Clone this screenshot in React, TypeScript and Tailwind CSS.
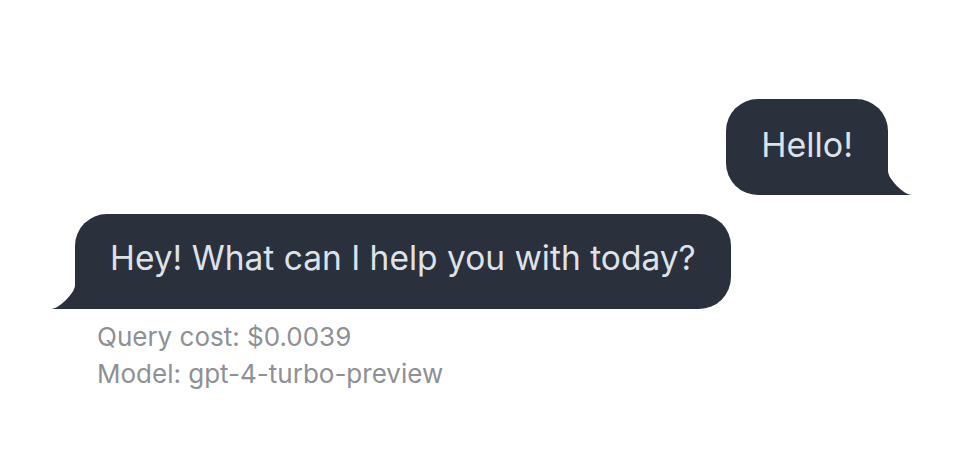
import React from "react";

function Tail({ side }: { side: "left" | "right" }) {
  return side === "left" ? (
    <svg className="absolute bottom-0 left-[-24px]" width="24" height="24" viewBox="0 0 3 3">
      <path d="M0 3 L3 3 L3 0 C3 1 1 3 0 3 Z" fill="#2a303c" />
    </svg>
  ) : (
    <svg className="absolute bottom-0 right-[-24px]" width="24" height="24" viewBox="0 0 3 3">
      <path d="M3 3 L0 3 L0 0 C0 1 2 3 3 3 Z" fill="#2a303c" />
    </svg>
  );
}

export default function App() {
  return (
    <div className="w-[966px] h-[468px] bg-white font-['Inter',sans-serif]">
      <div className="flex flex-col pt-[99px] pl-[75px] pr-[78px]">
        <div className="flex justify-end">
          <div className="relative h-[96px] flex items-center pb-[6px] px-[35px] bg-[#2a303c] text-[#dde2e9] text-[34px] rounded-t-[32px] rounded-bl-[32px]">
            Hello!
            <Tail side="right" />
          </div>
        </div>
        <div className="flex justify-start mt-[19px]">
          <div className="relative h-[95px] flex items-center pb-[6px] px-[35px] bg-[#2a303c] text-[#dde2e9] text-[33.5px] rounded-t-[32px] rounded-br-[32px]">
            Hey! What can I help you with today?
            <Tail side="left" />
          </div>
        </div>
        <div className="pl-[22px] pt-[9px] text-[26px] leading-[37px] text-[#8d9096]">
          <div>Query cost: $0.0039</div>
          <div>Model: gpt-4-turbo-preview</div>
        </div>
      </div>
    </div>
  );
}
